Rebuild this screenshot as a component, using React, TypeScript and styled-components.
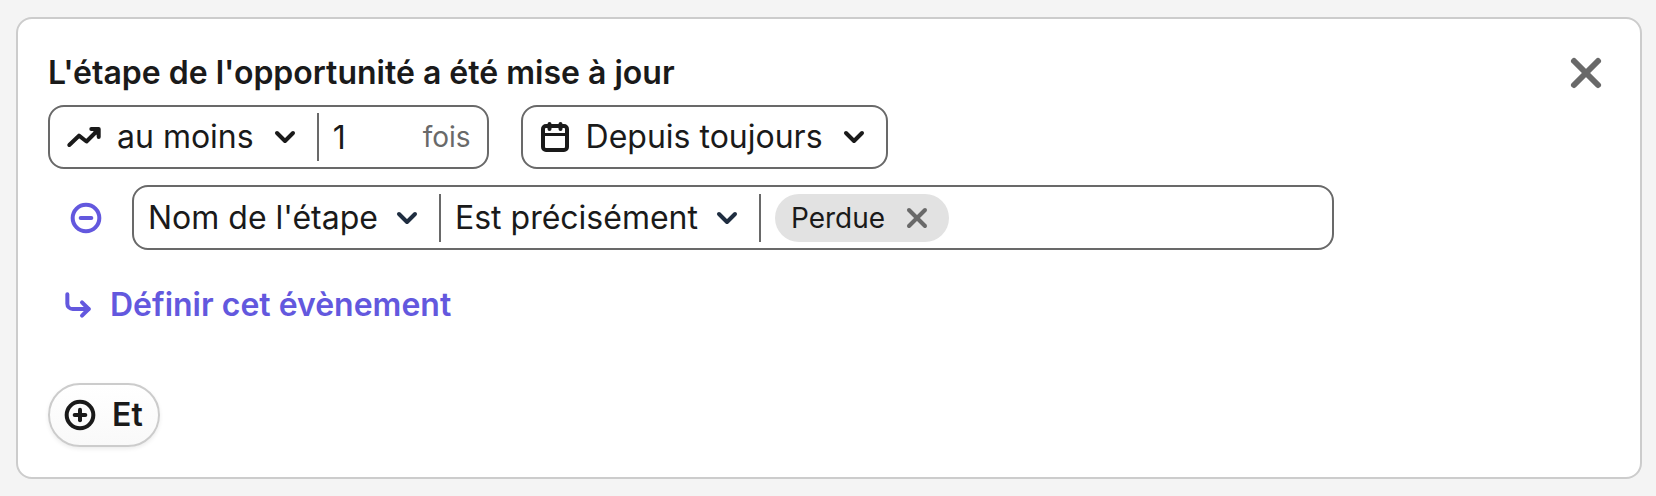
import React from "react";
import styled, { createGlobalStyle } from "styled-components";
import { ChevronDown, CircleMinus, CirclePlus, CornerDownRight, X } from "lucide-react";

const ink = "#1a1a1a";
const line = "#696969";
const accent = "#6358de";

const GlobalStyle = createGlobalStyle`
  *, *::before, *::after { box-sizing: border-box; }
  body {
    margin: 0;
    background: #f4f4f4;
    color: ${ink};
    font-family: Inter, "Liberation Sans", sans-serif;
    font-size: 32px;
    line-height: 40px;
  }
  button, input, select { font: inherit; color: inherit; margin: 0; }
  svg { display: block; flex: none; }
`;

const Page = styled.main`
  padding: 17px 14px 17px 16px;
`;

const Card = styled.section`
  display: flex;
  flex-direction: column;
  align-items: flex-start;
  padding: 30px;
  border: 2px solid #ccc;
  border-radius: 16px;
  background: #fff;
`;

const Header = styled.header`
  display: flex;
  align-self: stretch;
  align-items: center;
  justify-content: space-between;
  margin-bottom: 8px;
`;

const Title = styled.h2`
  margin: 0;
  font-size: 32px;
  font-weight: 600;
`;

const PlainButton = styled.button`
  display: flex;
  align-items: center;
  padding: 0;
  border: 0;
  background: none;
  cursor: pointer;
`;

const CloseButton = styled(PlainButton)`
  color: ${line};
`;

const Row = styled.div<{ $indent?: boolean }>`
  display: flex;
  align-self: stretch;
  align-items: center;
  gap: ${(p) => (p.$indent ? 30 : 32)}px;
  padding-left: ${(p) => (p.$indent ? 22 : 0)}px;
  margin-bottom: 16px;
`;

const Group = styled.div<{ $fill?: boolean }>`
  display: flex;
  align-items: center;
  min-height: 64px;
  border: 2px solid ${line};
  border-radius: 16px;
  ${(p) => p.$fill && "flex: 1; min-height: 65px; margin-right: 276px;"}
`;

const Divider = styled.span`
  width: 2px;
  height: 48px;
  background: ${line};
`;

const Picker = styled.label<{ $icon?: boolean; $arrow?: string }>`
  display: flex;
  align-items: center;
  gap: ${(p) => (p.$icon ? 15 : 13)}px;
  padding: 0 16px 0 ${(p) => (p.$icon ? 16 : 14)}px;

  svg:last-child {
    color: ${(p) => p.$arrow ?? ink};
    pointer-events: none;
  }
`;

const Select = styled.select`
  appearance: none;
  field-sizing: content;
  height: 48px;
  padding: 0;
  border: 0;
  outline: 0;
  background: none;
`;

const CountField = styled.label`
  display: flex;
  align-items: center;
  padding: 0 16px 0 14px;
`;

const CountInput = styled.input`
  width: 90px;
  height: 48px;
  padding: 0;
  border: 0;
  outline: 0;
  background: none;
`;

const Unit = styled.span`
  color: ${line};
  font-size: 28px;
`;

const Chip = styled.span`
  display: flex;
  align-items: center;
  gap: 16px;
  height: 48px;
  margin-left: 14px;
  padding: 0 16px;
  border-radius: 24px;
  background: #e2e2e2;
  font-size: 28px;
`;

const RemoveButton = styled(PlainButton)`
  color: ${line};
`;

const AccentButton = styled(PlainButton)`
  color: ${accent};
`;

const DefineButton = styled(AccentButton)`
  gap: 16px;
  height: 48px;
  margin: 15px 0 54px 14px;
  font-weight: 600;
`;

const AndButton = styled(PlainButton)`
  gap: 16px;
  height: 64px;
  padding: 0 15px 0 14px;
  border: 2px solid #ccc;
  border-radius: 32px;
  background: linear-gradient(#fff, #f9f9f9);
  box-shadow: 0 2px 4px rgba(0, 0, 0, 0.08);
  font-weight: 600;
`;

const TrendIcon = () => (
  <svg width="36" height="32" viewBox="0 0 36 32" fill="none" stroke="currentColor" strokeWidth="4" strokeLinecap="round" strokeLinejoin="round" aria-hidden="true">
    <path d="M3.3 24 13 14.7l7.5 5.8L31.5 9.5" />
    <path d="M25.3 8h7.4v8z" fill="currentColor" stroke="none" />
    <path d="M25.3 8h7.4v8" />
  </svg>
);

const CalendarIcon = () => (
  <svg width="32" height="32" viewBox="0 0 32 32" fill="none" stroke="currentColor" strokeWidth="4" strokeLinecap="round" strokeLinejoin="round" aria-hidden="true">
    <rect x="4" y="5" width="24" height="24" rx="3" />
    <path d="M4 13.5h24" strokeLinecap="butt" strokeWidth="3" />
    <path d="M10.5 3v5M21.5 3v5" />
  </svg>
);

type DropdownProps = { label: string; options: string[]; icon?: React.ReactNode; arrow?: string };

const Dropdown = ({ label, options, icon, arrow }: DropdownProps) => (
  <Picker $icon={Boolean(icon)} $arrow={arrow}>
    {icon}
    <Select aria-label={label}>
      {options.map((o) => (
        <option key={o}>{o}</option>
      ))}
    </Select>
    <ChevronDown size={32} strokeWidth={3} />
  </Picker>
);

export default function App() {
  return (
    <>
      <GlobalStyle />
      <Page>
        <Card>
          <Header>
            <Title>L'étape de l'opportunité a été mise à jour</Title>
            <CloseButton type="button" aria-label="Fermer">
              <X size={48} strokeWidth={3} />
            </CloseButton>
          </Header>
          <Row>
            <Group>
              <Dropdown label="Fréquence" options={["au moins"]} icon={<TrendIcon />} />
              <Divider />
              <CountField>
                <CountInput type="text" inputMode="numeric" defaultValue="1" aria-label="Nombre de fois" />
                <Unit>fois</Unit>
              </CountField>
            </Group>
            <Group>
              <Dropdown label="Période" options={["Depuis toujours"]} icon={<CalendarIcon />} />
            </Group>
          </Row>
          <Row $indent>
            <AccentButton type="button" aria-label="Retirer le filtre">
              <CircleMinus size={32} strokeWidth={3} />
            </AccentButton>
            <Group $fill>
              <Dropdown label="Propriété" options={["Nom de l'étape"]} arrow="#1f2d40" />
              <Divider />
              <Dropdown label="Opérateur" options={["Est précisément"]} arrow="#1f2d40" />
              <Divider />
              <Chip>
                Perdue
                <RemoveButton type="button" aria-label="Retirer Perdue">
                  <X size={32} strokeWidth={3} />
                </RemoveButton>
              </Chip>
            </Group>
          </Row>
          <DefineButton type="button">
            <CornerDownRight size={32} strokeWidth={3} />
            Définir cet évènement
          </DefineButton>
          <AndButton type="button">
            <CirclePlus size={32} strokeWidth={3} />
            Et
          </AndButton>
        </Card>
      </Page>
    </>
  );
}
